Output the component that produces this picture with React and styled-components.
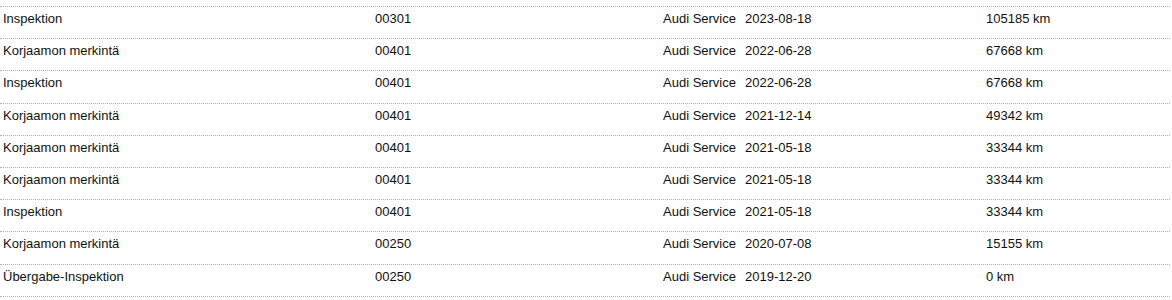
import React from 'react';
import styled, { createGlobalStyle } from 'styled-components';

const GlobalStyle = createGlobalStyle`
    body {
        margin: 0;
        background: #ffffff;
        font-family: "Liberation Sans", Arial, sans-serif;
        font-size: 13px;
        color: #111111;
    }
`;

const HistoryTable = styled.div`
    width: 1170px;
    padding-top: 6px;
    border-bottom: 1px dotted #b4b4b4;
`;

const HistoryRow = styled.div`
    display: grid;
    grid-template-columns: 372px 288px 82px 241px 1fr;
    height: 31.2px;
    border-top: 1px dotted #b4b4b4;
    box-sizing: content-box;
`;

const Cell = styled.div`
    padding: 4px 3px 0 3px;
    line-height: 15px;
    white-space: nowrap;
`;

const rows = [
    { type: 'Inspektion', code: '00301', date: '2023-08-18', km: '105185 km' },
    { type: 'Korjaamon merkintä', code: '00401', date: '2022-06-28', km: '67668 km' },
    { type: 'Inspektion', code: '00401', date: '2022-06-28', km: '67668 km' },
    { type: 'Korjaamon merkintä', code: '00401', date: '2021-12-14', km: '49342 km' },
    { type: 'Korjaamon merkintä', code: '00401', date: '2021-05-18', km: '33344 km' },
    { type: 'Korjaamon merkintä', code: '00401', date: '2021-05-18', km: '33344 km' },
    { type: 'Inspektion', code: '00401', date: '2021-05-18', km: '33344 km' },
    { type: 'Korjaamon merkintä', code: '00250', date: '2020-07-08', km: '15155 km' },
    { type: 'Übergabe-Inspektion', code: '00250', date: '2019-12-20', km: '0 km' },
];

const App = () => {
    return (
        <>
            <GlobalStyle />
            <HistoryTable>
                {rows.map((row, i) => (
                    <HistoryRow key={i}>
                        <Cell>{row.type}</Cell>
                        <Cell>{row.code}</Cell>
                        <Cell>Audi Service</Cell>
                        <Cell>{row.date}</Cell>
                        <Cell>{row.km}</Cell>
                    </HistoryRow>
                ))}
            </HistoryTable>
        </>
    );
}

export default App;
